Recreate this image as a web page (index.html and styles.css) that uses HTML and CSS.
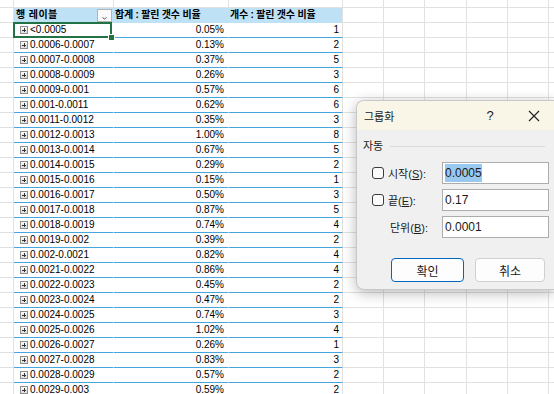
FILE: index.html
```html
<!DOCTYPE html>
<html lang="ko">
<head>
<meta charset="UTF-8"/>
<title>피벗 테이블 - 그룹화</title>
<link rel="stylesheet" href="styles.css">
</head>
<body>

<!-- WORKSHEET -->
<div class="sheet-view">
  <div class="sheet"></div>
</div>

<!-- GROUPING DIALOG -->
<div class="dialog">
  <div class="dlg-title">
    <span class="dlg-name">그룹화</span>
    <span class="dlg-help">?</span>
    <svg class="dlg-close" width="12" height="12" viewBox="0 0 12 12"><path d="M1 1L11 11M11 1L1 11" stroke="#1f1f1f" stroke-width="1.1" fill="none"/></svg>
  </div>
  <div class="group-head"><span>자동</span><i class="group-line"></i></div>
  <div class="field">
    <span class="check"></span>
    <label>시작(<u>S</u>):</label>
    <span class="input"><span class="hl">0.0005</span></span>
  </div>
  <div class="field">
    <span class="check"></span>
    <label>끝(<u>E</u>):</label>
    <span class="input">0.17</span>
  </div>
  <div class="field plain">
    <label>단위(<u>B</u>):</label>
    <span class="input">0.0001</span>
  </div>
  <div class="buttons">
    <button class="btn primary">확인</button>
    <button class="btn cancel">취소</button>
  </div>
</div>

<script>
(function(){
const rows = [
  ["<0.0005","0.05%",1],
  ["0.0006-0.0007","0.13%",2],
  ["0.0007-0.0008","0.37%",5],
  ["0.0008-0.0009","0.26%",3],
  ["0.0009-0.001","0.57%",6],
  ["0.001-0.0011","0.62%",6],
  ["0.0011-0.0012","0.35%",3],
  ["0.0012-0.0013","1.00%",8],
  ["0.0013-0.0014","0.67%",5],
  ["0.0014-0.0015","0.29%",2],
  ["0.0015-0.0016","0.15%",1],
  ["0.0016-0.0017","0.50%",3],
  ["0.0017-0.0018","0.87%",5],
  ["0.0018-0.0019","0.74%",4],
  ["0.0019-0.002","0.39%",2],
  ["0.002-0.0021","0.82%",4],
  ["0.0021-0.0022","0.86%",4],
  ["0.0022-0.0023","0.45%",2],
  ["0.0023-0.0024","0.47%",2],
  ["0.0024-0.0025","0.74%",3],
  ["0.0025-0.0026","1.02%",4],
  ["0.0026-0.0027","0.26%",1],
  ["0.0027-0.0028","0.83%",3],
  ["0.0028-0.0029","0.57%",2],
  ["0.0029-0.003","0.59%",2]
];
const COLS = 10;
const sheet = document.querySelector('.sheet');

function addCell(cls, text){
  const c = document.createElement('div');
  c.className = 'cell' + (cls ? ' ' + cls : '');
  if(text !== undefined) c.textContent = text;
  sheet.appendChild(c);
  return c;
}
function blanks(n){ for(let i=0;i<n;i++) addCell(); }

// partial row at the top
blanks(COLS);

// pivot header
addCell();
const head = addCell('pv pv-head pv-label');
head.innerHTML = '<span>행 레이블</span><span class="dd"><svg width="13" height="11" viewBox="0 0 13 11"><path d="M4.5 7.5L6.5 9L8.5 7.5" stroke="#555" fill="none"/></svg></span>';
addCell('pv pv-head', '합계 : 팔린 갯수 비율');
addCell('pv pv-head pv-end', '개수 : 팔린 갯수 비율');
blanks(COLS-4);

// pivot body
rows.forEach((r,i)=>{
  addCell();
  const lab = addCell('pv pv-label' + (i===0 ? ' sel' : ''));
  const ex = document.createElement('span');
  ex.className = 'expand';
  lab.appendChild(ex);
  lab.appendChild(document.createTextNode(r[0]));
  addCell('pv num', r[1]);
  addCell('pv num pv-end', String(r[2]));
  blanks(COLS-4);
});
})();
</script>
</body>
</html>
```

FILE: styles.css
```css
/* GLOBAL */
body,html {
  margin:0; padding:0; background:#fff; overflow:hidden;
  font-family:"Liberation Sans","Noto Sans CJK KR",sans-serif;
}
:root {
  --grid:#e1e1e1;
  --pivot-line:#47a5dd;
  --pivot-head:#bfe1f5;
  --select:#217346;
}

/* WORKSHEET */
.sheet-view {width:554px; height:394px; overflow:hidden;}
.sheet {
  display:grid;
  grid-template-columns:14px 100px 115px 114px 41px 41px 42px 41px 41px 41px;
  grid-template-rows:8px;
  grid-auto-rows:15px;
  width:590px;
}
.cell {
  box-sizing:border-box; border-right:1px solid var(--grid); border-bottom:1px solid var(--grid);
  font-size:10px; line-height:14px; color:#000; white-space:nowrap;
}
.pv {border-right-color:transparent; border-bottom-color:var(--pivot-line);}
.pv-end {border-right-color:var(--grid);}
.pv-head {
  background:var(--pivot-head); border-bottom-color:var(--pivot-head);
  font-weight:bold; padding-left:1px; letter-spacing:-0.2px;
}
.pv-label {display:flex; align-items:center; padding-left:6px;}
.pv-head.pv-label {justify-content:space-between; padding:0 1px 0 2px; letter-spacing:0.4px;}
.num {text-align:right; padding-right:4px;}
.pv-end.num {padding-right:3px;}

.dd {
  display:block; width:15px; height:13px; box-sizing:border-box;
  border:1px solid #b3b3b3; background:#fafafa;
}
.dd svg {display:block;}

.expand {
  position:relative; flex:none; width:8px; height:8px; box-sizing:border-box; margin-right:2px;
  border:1px solid #8d8d8d; background:linear-gradient(#fafafa,#dedede);
}
.expand::before,.expand::after {content:""; position:absolute; background:#333;}
.expand::before {left:1px; top:2.5px; width:4px; height:1px;}
.expand::after {left:2.5px; top:1px; width:1px; height:4px;}

.sel {position:relative;}
.sel::after {
  content:""; position:absolute; left:-1px; top:-1px; right:1px; bottom:-1px;
  border:2px solid var(--select);
}
.sel::before {
  content:""; position:absolute; right:-1px; bottom:-3px; width:5px; height:5px; z-index:1;
  background:var(--select); box-shadow:0 0 0 1px #fff;
}

/* GROUPING DIALOG */
.dialog {
  position:absolute; left:356px; top:100px; width:198px; height:190px; box-sizing:border-box;
  background:#f0f0f0; border:1px solid #c8c8c8; border-right:none; border-radius:8px 0 0 8px; overflow:hidden;
  box-shadow:0 3px 14px rgba(0,0,0,0.28);
  font-size:11px; color:#1a1a1a;
}
.dlg-title {
  height:29px; background:#f9f6e8; display:flex; align-items:center; padding-left:7px;
}
.dlg-name {flex:1;}
.dlg-help {width:12px; text-align:center; margin-right:32px; font-size:13px;}
.dlg-close {display:block; margin-right:14px;}

.group-head {display:flex; align-items:center; height:14px; margin:8px 9px 0 6px; gap:7px;}
.group-line {flex:1; height:1px; background:#dadada; margin-top:3px;}

.field {display:flex; align-items:center; height:22px; margin:5px 5px 0 0;}
.group-head + .field {margin-top:10px;}
.check {
  width:12px; height:12px; box-sizing:border-box; margin:0 4px 0 15px;
  border:1px solid #3c3c3c; border-radius:3px; background:#fbfbfb;
}
.field label {flex:1;}
.field.plain label {margin-left:33px;}
.field u {text-underline-offset:1px;}
.input {
  display:flex; align-items:center; width:107px; height:22px; box-sizing:border-box;
  border:1px solid #adadad; background:#fff; padding-left:2px; font-size:12px;
}
.hl {background:#99c9ef; line-height:18px;}

.buttons {display:flex; gap:11px; margin-top:20px; padding-left:34px;}
.btn {
  height:24px; width:73px; border:1px solid #d0d0d0; border-radius:4px; background:#fdfdfd;
  font-family:inherit; font-size:12px; color:#1a1a1a; padding:0;
}
.btn.primary {border-color:#0067c0;}
.btn.cancel {width:70px;}
```
